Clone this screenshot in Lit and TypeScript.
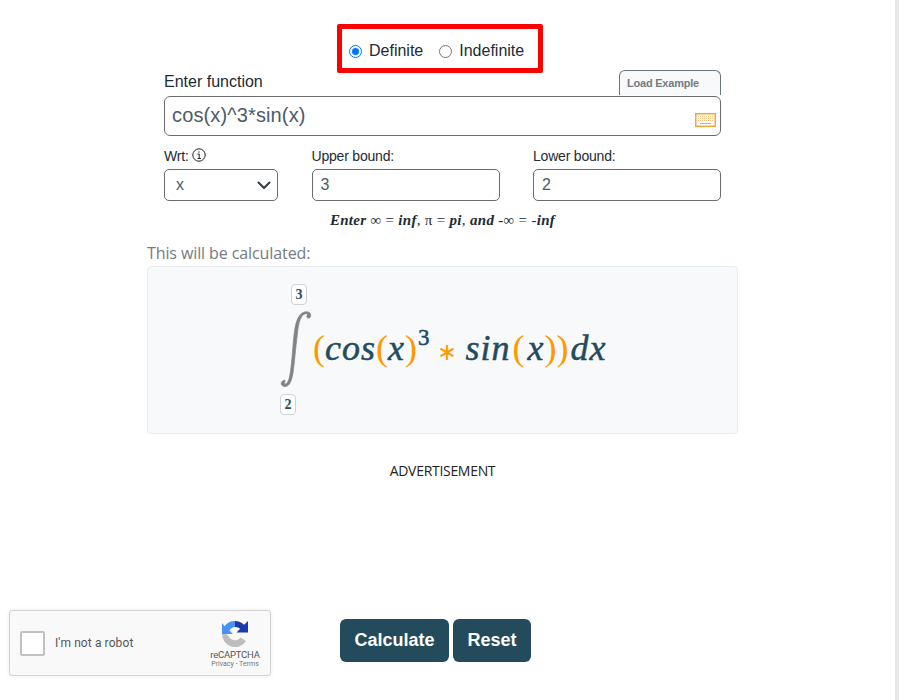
import { LitElement, html, css } from "lit";
import { customElement } from "lit/decorators.js";

@customElement("app-root")
export class AppRoot extends LitElement {
  static styles = css`
    :host { display: block; height: 700px; overflow: hidden; background: #fff; font-family: "Liberation Sans", Arial, sans-serif; color: #212529; }
    * { box-sizing: border-box; }
    .page { display: grid; grid-template-columns: 885px 10px 4px; height: 700px; }
    .strip { grid-column: 3; background: #e8e8e8; }
    .main { display: flex; flex-direction: column; align-items: center; padding-top: 24px; }

    .radio-box { width: 206px; height: 49px; border: 5px solid #f00; border-radius: 2px; display: flex; align-items: center; padding: 5px 0 0 7px; font-size: 16px; color: #212b36; margin: 0 5px -3px 0; }
    .radio { display: block; width: 13px; height: 13px; border-radius: 50%; border: 1px solid #767676; background: #fff; margin-right: 7px; flex: none; margin-top: 1px; }
    .radio.on { border: 1.5px solid #0075ff; padding: 1.5px; }
    .radio.on i { display: block; width: 7px; height: 7px; border-radius: 50%; background: #0075ff; }
    .gap { width: 16px; }

    .form { width: 557px; }
    .top { display: flex; justify-content: space-between; align-items: flex-end; height: 25px; }
    .fn { font-size: 16px; line-height: 18px; margin-bottom: 4px; color: #212b36; }
    .tab { width: 102px; height: 25px; border: 1px solid #6c757d; border-bottom: none; border-radius: 6px 6px 0 0; background: #f8f9fa; color: #757b81; font-size: 11px; font-weight: bold; padding: 6px 0 0 7px; line-height: 13px; letter-spacing: -0.22px; }
    .fn-input { margin-top: 1px; height: 40px; border: 1px solid #6b6b6b; border-radius: 6px; display: flex; align-items: center; justify-content: space-between; padding: 0 4px 2px 7px; font-size: 20px; letter-spacing: 0.13px; color: #495d69; }
    .fn-input svg { margin-top: 10px; }

    .row { display: grid; grid-template-columns: 114px 188px 188px; justify-content: space-between; margin-top: 12px; }
    .lab { font-size: 14px; line-height: 16px; height: 21px; color: #212b36; display: flex; align-items: flex-start; gap: 3px; letter-spacing: -0.2px; }
    .field { height: 32px; border: 1px solid #6b6b6b; border-radius: 5px; display: flex; align-items: center; justify-content: space-between; padding: 0 8px; font-size: 16px; color: #495d69; }
    .field.sel { padding: 0 6px 0 11px; }
    .hint { font-family: "Liberation Serif", serif; font-style: italic; font-weight: bold; font-size: 15px; letter-spacing: 0.3px; color: #1c2b33; text-align: center; margin-top: 11px; line-height: 16px; height: 16px; }
    .hint b { font-style: normal; font-weight: normal; }

    .calc-wrap { width: 591px; margin-top: 14px; }
    .calc-t { font-family: "Open Sans", sans-serif; font-size: 16px; line-height: 22px; color: #757b81; letter-spacing: -0.1px; }
    .calc { height: 168px; margin-top: 2px; background: #f8f9fa; border: 1px solid #e9ecef; border-radius: 4px; display: flex; padding: 17px 0 0 132px; }
    .int { width: 33px; flex: none; display: flex; flex-direction: column; align-items: flex-start; }
    .bd { display: block; width: 16px; height: 21px; background: #fff; border: 1px solid #cfd3d6; border-radius: 4px; font-family: "Liberation Serif", serif; font-weight: bold; font-size: 14px; line-height: 19px; text-align: center; color: #234b5b; }
    .bd.u { margin-left: 11px; }
    .int svg { margin: 6px 0 5px 0; display: block; }
    .eq { display: flex; align-items: baseline; height: 0; margin-top: 44px; font-family: "Liberation Serif", serif; font-style: italic; font-size: 36px; line-height: 40px; color: #234b5b; -webkit-text-stroke: 0.5px #234b5b; white-space: pre; letter-spacing: 1px; }
    .eq .o { color: #f90; font-style: normal; font-weight: normal; -webkit-text-stroke: 0; letter-spacing: 0; }
    .eq .ml2 { margin-left: 2px; }
    .eq .ml3 { margin-left: 3px; }
    .eq sup { font-style: normal; font-size: 23px; line-height: 0; position: relative; top: -15px; letter-spacing: 0; margin-left: 1px; }
    .eq .star { font-size: 24px; margin: 0 8px 0 8px; }
    .ad { font-family: "Open Sans", sans-serif; font-size: 14px; line-height: 18px; color: #222; margin-top: 28px; letter-spacing: -0.3px; }

    .bottom { width: 885px; display: flex; margin-top: 130px; padding-left: 9px; align-items: flex-start; }
    .rc { width: 262px; height: 66px; background: #f9f9f9; border: 1px solid #d3d3d3; border-radius: 3px; box-shadow: 0 0 4px rgba(0,0,0,.08); display: flex; align-items: center; padding: 0 10px; font-family: Roboto, sans-serif; }
    .cb { width: 25px; height: 25px; background: #fff; border: 2px solid #c1c1c1; border-radius: 2px; flex: none; }
    .rt { font-size: 12px; color: #555; margin-left: 10px; flex: 1; letter-spacing: .1px; }
    .rl { display: flex; flex-direction: column; align-items: center; width: 52px; margin: 3px -1px 0 0; }
    .rl .n { font-size: 9.500px; line-height: 10px; color: #555; margin-top: 2px; letter-spacing: -.2px; }
    .rl .p { font-size: 7px; line-height: 9px; color: #777; }
    .btns { display: flex; gap: 4px; margin: 9px 0 0 69px; }
    .btn { height: 43px; border-radius: 6px; background: #234b5b; color: #fff; font-weight: bold; font-size: 18px; display: flex; align-items: center; justify-content: center; }
    .btn.c { width: 109px; }
    .btn.r { width: 78px; }
  `;

  render() {
    return html`
      <div class="page">
        <div class="main">
          <div class="radio-box">
            <span class="radio on"><i></i></span>Definite
            <span class="gap"></span>
            <span class="radio"></span>Indefinite
          </div>
          <div class="form">
            <div class="top">
              <div class="fn">Enter function</div>
              <div class="tab">Load Example</div>
            </div>
            <div class="fn-input">
              <span>cos(x)^3*sin(x)</span>
              <svg width="21" height="14" viewBox="0 0 21 14" fill="none">
                <rect x=".75" y=".75" width="19.500" height="12.500" fill="#fff" stroke="#f7a433" stroke-width="1.500"/>
                <path d="M3 3.500h15M3 5.500h15M3 7.500h15" stroke="#f9c285" stroke-dasharray="1 1"/>
                <path d="M5 10.500h11" stroke="#f7a433"/>
              </svg>
            </div>
            <div class="row">
              <div>
                <div class="lab">Wrt:
                  <svg width="14" height="14" viewBox="0 0 14 14" fill="none" stroke="#222">
                    <circle cx="7" cy="7" r="6.200"/>
                    <path d="M5.500 6h1.700v4.500M5.500 10.500h3.400M7 3.300v1.400"/>
                  </svg>
                </div>
                <div class="field sel">x
                  <svg width="14" height="9" viewBox="0 0 14 9" fill="none" stroke="#343a40" stroke-width="2" stroke-linecap="round" stroke-linejoin="round"><path d="M1.500 1.500 7 7l5.500-5.500"/></svg>
                </div>
              </div>
              <div>
                <div class="lab">Upper bound:</div>
                <div class="field">3</div>
              </div>
              <div>
                <div class="lab">Lower bound:</div>
                <div class="field">2</div>
              </div>
            </div>
            <div class="hint">Enter <b>∞ = </b>inf<b>, π = </b>pi<b>, </b>and<b> -∞ = -</b>inf</div>
          </div>
          <div class="calc-wrap">
            <div class="calc-t">This will be calculated:</div>
            <div class="calc">
              <div class="int">
                <span class="bd u">3</span>
                <svg width="32" height="78" viewBox="0 0 32 78">
                  <path fill="#808487" stroke="#808487" stroke-width=".7" d="M2 70.500C.5 72 1 75 4.500 75.500C9 76 11.500 71 13 62C14.500 52 15.500 38 17.500 22C18.500 12 20.500 3.500 26 2.500C28 2.200 27.500 3.500 27 4.500C26 6.500 28.500 8 30 6.500C31.500 5 31 1 27 .8C21 .5 17 6 15 17C13 29 12.500 45 11 56C10 65 8.500 72.500 5.500 73C4 73.200 4.500 71.500 5 70.500C5.500 68.500 3.500 69 2 70.500Z"/>
                </svg>
                <span class="bd">2</span>
              </div>
              <div class="eq"><span class="o">(</span>cos<span class="o">(</span>x<span class="o">)</span><sup>3</sup><span class="o star">∗</span>sin<span class="o ml2">(</span><span class="ml3">x</span><span class="o">))</span><span class="ml2">dx</span></div>
            </div>
          </div>
          <div class="ad">ADVERTISEMENT</div>
          <div class="bottom">
            <div class="rc">
              <span class="cb"></span>
              <span class="rt">I'm not a robot</span>
              <div class="rl">
                <svg width="28" height="28" viewBox="0 0 28 28">
                  <path fill="#bdbdbd" d="M1 14A13 13 0 0 0 25 21L19.500 17.500A7 7 0 0 1 7.500 16L5 14Z"/>
                  <path fill="#4a90f5" d="M14 1A13 13 0 0 0 3.500 6.300L1 3V14H12L8.500 10.500A7 7 0 0 1 14 7Z"/>
                  <path fill="#1c3aa9" d="M14 1A13 13 0 0 1 23.200 4.800L27 1V12.500H15.500L19.200 8.800A7 7 0 0 0 14 7Z"/>
                </svg>
                <span class="n">reCAPTCHA</span>
                <span class="p">Privacy - Terms</span>
              </div>
            </div>
            <div class="btns">
              <div class="btn c">Calculate</div>
              <div class="btn r">Reset</div>
            </div>
          </div>
        </div>
        <div class="strip"></div>
      </div>
    `;
  }
}
